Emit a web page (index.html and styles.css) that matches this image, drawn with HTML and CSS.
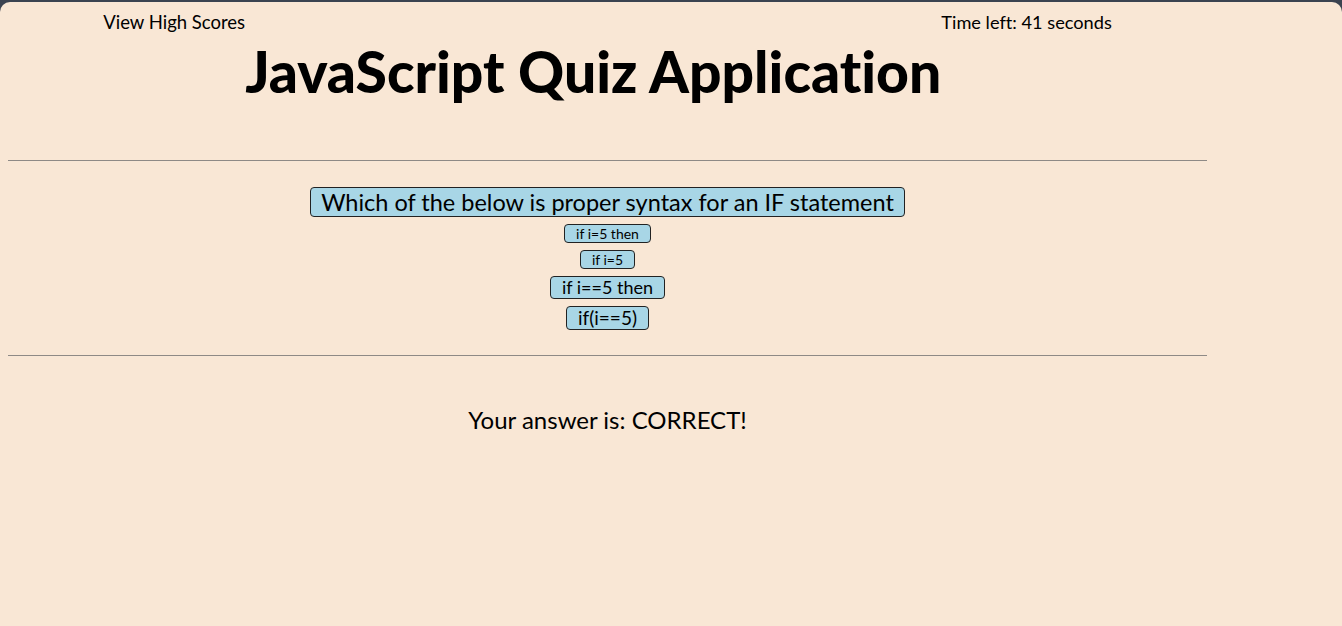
FILE: index.html
```html
<!DOCTYPE html>
<html lang="en">
<head>
<meta charset="utf-8">
<title>JavaScript Quiz Application</title>
<link rel="stylesheet" href="styles.css">
</head>
<body>
<div class="page">
  <header class="header">
    <a class="scores-link">View High Scores</a>
    <h1 class="title">JavaScript Quiz Application</h1>
    <div class="timer">Time left: 41 seconds</div>
  </header>
  <hr class="rule">
  <section class="quiz">
    <button class="question">Which of the below is proper syntax for an IF statement</button>
    <button class="choice choice-xs">if i=5 then</button>
    <button class="choice choice-xs">if i=5</button>
    <button class="choice choice-md">if i==5 then</button>
    <button class="choice choice-lg">if(i==5)</button>
  </section>
  <hr class="rule">
  <p class="result">Your answer is: CORRECT!</p>
</div>
</body>
</html>
```

FILE: styles.css
```css
html {
  background: #3b4350;
  margin: 0;
  padding: 0;
}
body {
  margin: 2px 0 0 0;
  padding: 8px;
  min-height: calc(100vh - 2px);
  box-sizing: border-box;
  background: #f9e7d5;
  border-radius: 10px 10px 0 0;
  font-family: "Lato", "Liberation Sans", sans-serif;
  font-variant-ligatures: none;
  color: #000;
}
.page {
  width: 1199px;
}
.header {
  display: flex;
  justify-content: center;
  align-items: flex-start;
}
.scores-link {
  font-size: 18.5px;
  line-height: 24px;
}
.timer {
  font-size: 18.2px;
  line-height: 24px;
}
.title {
  margin: 31px 0 59px;
  font-size: 57px;
  line-height: 60px;
  font-weight: 900;
}
.rule {
  margin: 0;
  border: 0;
  border-top: 1px solid #8e8a86;
  height: 0;
}
.quiz {
  display: flex;
  flex-direction: column;
  align-items: center;
  gap: 7px;
  padding: 26px 0 25px;
}
.question, .choice {
  font-family: inherit;
  font-variant-ligatures: none;
  background: #a8d6e6;
  border: 1px solid #222;
  border-radius: 4px;
  color: #000;
  padding: 0 11px;
  margin: 0;
}
.question {
  font-size: 23.5px;
  line-height: 28px;
  padding: 0 10px;
}
.choice-xs {
  font-size: 14px;
  line-height: 17px;
}
.choice-md {
  font-size: 18px;
  line-height: 21px;
}
.choice-lg {
  font-size: 19px;
  line-height: 22px;
}
.result {
  margin: 49px 0 0;
  text-align: center;
  font-size: 24px;
  line-height: 30px;
}
```
